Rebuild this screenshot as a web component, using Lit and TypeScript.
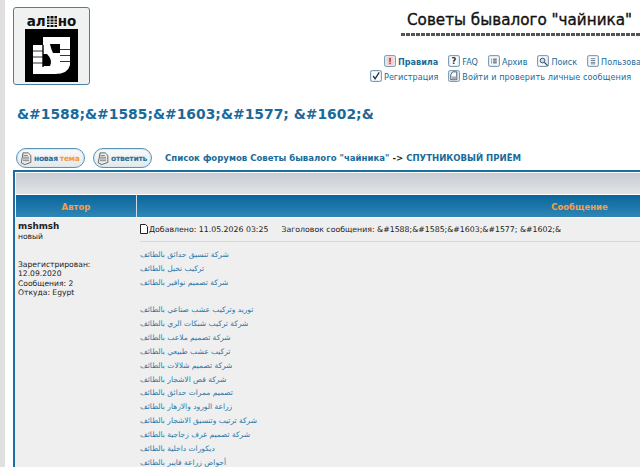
import { LitElement, html, css, svg } from "lit";
import { customElement } from "lit/decorators.js";

const ent = "&#1588;&#1585;&#1603;&#1577; &#1602;&";
const lines = [
  "شركة تنسيق حدائق بالطائف",
  "تركيب نخيل بالطائف",
  "شركة تصميم نوافير بالطائف",
  "",
  "توريد وتركيب عشب صناعي بالطائف",
  "شركة تركيب شبكات الري بالطائف",
  "شركة تصميم ملاعب بالطائف",
  "تركيب عشب طبيعي بالطائف",
  "شركة تصميم شلالات بالطائف",
  "شركة قص الاشجار بالطائف",
  "تصميم ممرات حدائق بالطائف",
  "زراعة الورود والازهار بالطائف",
  "شركة ترتيب وتنسيق الاشجار بالطائف",
  "شركة تصميم غرف زجاجية بالطائف",
  "ديكورات داخلية بالطائف",
  "أحواض زراعة فايبر بالطائف",
];

const box = (inner: unknown, stroke = "#6f93ad", fill = "#dfe8ee") => html`<svg class="ico" viewBox="0 0 13 13" width="12" height="12">
  <rect x=".5" y=".5" width="12" height="12" rx="2" fill=${fill} stroke=${stroke}></rect>${inner}</svg>`;

const icons = {
  rules: box(svg`<rect x="3" y="2" width="7" height="9" fill="#f3d0d0"/><rect x="5.7" y="3" width="1.6" height="4.5" fill="#c22"/><rect x="5.7" y="8.3" width="1.6" height="1.6" fill="#c22"/>`),
  faq: box(svg`<rect x="2.5" y="2" width="8" height="9" fill="#fff"/><text x="6.5" y="9.8" font-size="9" font-weight="700" text-anchor="middle" fill="#234" font-family="DejaVu Sans">?</text>`),
  arch: box(svg`<rect x="2.5" y="2.5" width="8" height="8" fill="#fff"/><path d="M3.5 4.5h1M3.5 6.5h1M3.5 8.5h1M5.5 4.5h4M5.5 6.5h4M5.5 8.5h4" stroke="#234"/>`),
  search: box(svg`<rect x="2" y="2" width="8" height="9" fill="#fff"/><circle cx="6" cy="6" r="2.6" fill="#bfe0f2" stroke="#345"/><path d="M8 8l3.5 3.5" stroke="#345" stroke-width="1.4"/>`),
  users: box(svg`<rect x="2.5" y="2" width="8" height="9" fill="#fff"/><path d="M4 4h5M4 6h5M4 8h5M4 9.6h5" stroke="#456" stroke-width=".8"/>`),
  reg: box(svg`<rect x="2" y="2" width="9" height="9" fill="#fff"/><path d="M3.5 6.5l2 3 4.5-7" fill="none" stroke="#234" stroke-width="1.5"/>`),
  login: box(svg`<path d="M3 10.5V5l2-3h4.5v8.5z" fill="#fff" stroke="#456"/><rect x="4" y="7" width="5" height="3" fill="#aab"/>`),
};

const doc = html`<svg class="doc" viewBox="0 0 15 16" width="13" height="15">
  <path d="M3.5 1.5h6l3 3v8l-7 2.5-4-2z" fill="#eceded" stroke="#555"></path>
  <path d="M4 4.5h5M3.5 6.5h7M3.5 8.5h7M3.5 10.5h7" stroke="#777"></path></svg>`;

@customElement("app-root")
export class AppRoot extends LitElement {
  static styles = css`
    :host { display: block; width: 640px; height: 467px; overflow: hidden; background: #fff; font-family: "DejaVu Sans", sans-serif; font-size: 9px; color: #222; }
    .page { width: 1100px; border-left: 5px solid #e0e0e0; height: 467px; box-sizing: border-box; padding: 7px 0 0 8px; }
    .top { display: flex; height: 88px; }
    .logo { flex: none; width: 77px; height: 78px; box-sizing: border-box; border: 1px solid #4a7fa3; border-radius: 3px; background: #f0f2f2; display: flex; flex-direction: column; align-items: center; padding-top: 5px; }
    .logo-t { font-weight: 700; font-size: 13.5px; line-height: 15px; height: 16px; color: #111; display: flex; align-items: center; }
    .logo-t svg { margin: 0 1px; }
    .logo-box { width: 53px; height: 53px; background: #000; display: flex; align-items: center; justify-content: center; }
    .right { margin-left: 275px; flex: none; width: 700px; }
    .title-t { font-size: 15.2px; line-height: 22px; color: #111; padding-left: 42px; margin-top: 2px; -webkit-text-stroke: .35px #111; white-space: nowrap; }
    .dash { margin-left: 36px; height: 3px; margin-top: 2px; background: repeating-linear-gradient(90deg, #555 0 4px, #fff 4px 5px); }
    .nav { color: #1a6a9a; white-space: nowrap; line-height: 15px; font-size: 8.1px; display: flex; height: 15px; gap: 10px; }
    .nav1 { margin-top: 19px; padding-left: 19px; }
    .nav2 { padding-left: 5px; }
    .i { display: inline-flex; align-items: center; gap: 2px; }
    .wide { letter-spacing: .1px; }
    .ico { display: block; margin-top: -3px; }
    .b { font-weight: 700; }
    h1 { margin: 7px 0 0 4px; font-size: 13.9px; line-height: 24px; font-weight: 700; color: #1a6a9a; white-space: nowrap; }
    .tools { display: flex; align-items: center; margin-top: 22px; margin-left: 3px; height: 20px; }
    .btn { flex: none; height: 20px; box-sizing: border-box; border: 1px solid #5a93b8; box-shadow: inset 0 0 0 1px #dce8ef; border-radius: 10px; background: linear-gradient(#fafafa, #e4e8ea); display: flex; align-items: center; padding-left: 3px; font-size: 7.6px; font-weight: 700; color: #2a6f99; letter-spacing: -.3px; white-space: nowrap; }
    .btn.n { width: 69px; }
    .btn.r { width: 59px; margin-left: 8px; }
    .btn em { color: #f59a3a; font-style: normal; margin-left: 2px; }
    .btn svg { margin-right: 1px; }
    .crumb { margin-left: 13px; font-weight: 700; color: #1a6a9a; white-space: nowrap; font-size: 8.55px; }
    .crumb i { color: #222; font-style: normal; }
    .tbl { margin-top: 2px; border: 2px solid #1a6fa0; border-right: none; background: #efefef; height: 320px; box-sizing: border-box; width: 1090px; }
    .bar { height: 23px; background: linear-gradient(#c6ccd3, #e2e4e7); border: 1px solid #fff; border-right: none; box-sizing: border-box; }
    .head { display: flex; height: 23px; background: linear-gradient(#0a669b, #2f86b6); color: #f5a04a; font-weight: 700; font-size: 8.5px; line-height: 24px; text-align: center; border-bottom: 1px solid #fff; border-left: 1px solid #fff; box-sizing: border-box; }
    .c1 { flex: none; width: 120px; border-right: 1px solid #d0dde6; }
    .c2 { flex: none; width: 885px; }
    .row { display: flex; }
    .side { flex: none; width: 121px; padding: 2px 0 0 3px; box-sizing: border-box; line-height: 9.5px; font-size: 7.6px; color: #222; }
    .name { font-weight: 700; font-size: 8.8px; line-height: 12px; }
    .meta { margin-top: 18px; }
    .msg { flex: 1; margin-left: 4px; }
    .phead { height: 20px; display: flex; align-items: center; border-bottom: 1px solid #d8d8d8; font-size: 7.8px; white-space: nowrap; margin-top: 1px; padding-bottom: 2px; }
    .phead svg { margin-right: 1px; }
    .phead .subj { margin-left: 13px; }
    .body { padding-top: 6px; color: #2b78a8; font-size: 7.5px; line-height: 13.85px; }
    .body div { height: 13.85px; white-space: nowrap; }
  `;

  render() {
    return html`<div class="page">
      <div class="top">
        <div class="logo">
          <div class="logo-t">ал<svg width="10" height="11" viewBox="0 0 10 11"><rect width="10" height="11" fill="#111"></rect><path d="M0 3h10M0 6h10M0 8.5h10M3 0v11M7 0v11" stroke="#f0f2f2"></path></svg>но</div>
          <div class="logo-box">
            <svg width="37" height="37" viewBox="0 0 37 37">
              <path d="M10 0H37V28Q35 37 22 37H0V8H10Z" fill="#fff"></path>
              <path d="M17 7H27V16H20Q18 12 17 7Z" fill="#000"></path>
              <path d="M10 17H14Q20 23 17 29L10 29Z" fill="#000"></path>
              <path d="M0 14H10M0 20H10M0 26H10M27 12.5H37M27 18.5H37M27 24.5H37" stroke="#000" stroke-width=".8"></path>
              <path d="M10 8V30" stroke="#000" stroke-width="1.4"></path>
            </svg>
          </div>
        </div>
        <div class="right">
          <div class="title-t">Советы бывалого "чайника"</div>
          <div class="dash"></div>
          <div class="nav nav1">
            <span class="i">${icons.rules}<span class="b">Правила</span></span>
            <span class="i">${icons.faq}FAQ</span>
            <span class="i">${icons.arch}Архив</span>
            <span class="i">${icons.search}Поиск</span>
            <span class="i">${icons.users}Пользователи</span>
          </div>
          <div class="nav nav2">
            <span class="i">${icons.reg}Регистрация</span>
            <span class="i wide">${icons.login}Войти и проверить личные сообщения</span>
          </div>
        </div>
      </div>
      <h1>${ent}</h1>
      <div class="tools">
        <div class="btn n">${doc}<span>новая</span><em>тема</em></div>
        <div class="btn r">${doc}<span>ответить</span></div>
        <div class="crumb">Список форумов Советы бывалого "чайника" <i>-&gt;</i> СПУТНИКОВЫЙ ПРИЁМ</div>
      </div>
      <div class="tbl">
        <div class="bar"></div>
        <div class="head"><div class="c1">Автор</div><div class="c2">Сообщение</div></div>
        <div class="row">
          <div class="side">
            <div class="name">mshmsh</div>
            <div>новый</div>
            <div class="meta">Зарегистрирован:<br />12.09.2020<br />Сообщения: 2<br />Откуда: Egypt</div>
          </div>
          <div class="msg">
            <div class="phead">
              <svg width="8" height="10" viewBox="0 0 8 10"><path d="M.5.5h5l2 2v7h-7z" fill="#fff" stroke="#222"></path></svg>
              <span>Добавлено: 11.05.2026 03:25</span>
              <span class="subj">Заголовок сообщения: ${ent}</span>
            </div>
            <div class="body">${lines.map((l) => html`<div>${l}</div>`)}</div>
          </div>
        </div>
      </div>
    </div>`;
  }
}
